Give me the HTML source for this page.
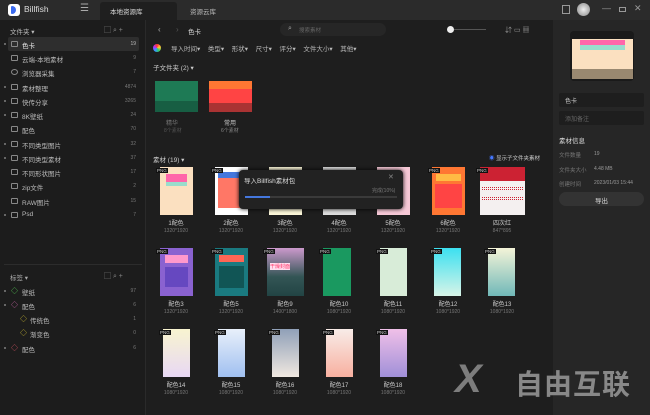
<!DOCTYPE html><html><head><meta charset="utf-8"><style>
*{margin:0;padding:0;box-sizing:border-box}
body{width:650px;height:415px;overflow:hidden;background:#1e1e1e;font-family:"Liberation Sans","Noto Sans CJK SC",sans-serif;color:#ccc;position:relative;font-size:7px}
.a{position:absolute}
.t{position:absolute;white-space:nowrap}
.side{left:0;top:20px;width:146px;height:395px;background:#1c1c1c;border-right:1px solid #2a2a2a}
.row{position:absolute;left:0;width:146px;height:13px;font-size:6.5px;color:#bbb}
.row .n{position:absolute;right:10px;top:3px;font-size:5px;color:#777}
.row .l{position:absolute;left:22px;top:2px}
.row .i{position:absolute;left:11px;top:3px;width:7px;height:6px;border:1px solid #888;border-radius:1px}
.row .d{position:absolute;left:4px;top:5px;width:2px;height:2px;background:#666}
.th{position:absolute;width:33px;height:48px}
.cap{position:absolute;width:60px;text-align:center;font-size:6px;color:#ccc}
.sz{position:absolute;width:60px;text-align:center;font-size:5px;color:#777}
.png{position:absolute;font-size:4.5px;background:#111;color:#ccc;padding:0 1px;left:-4px;top:1px}
</style></head><body>
<div class="a" style="left:0;top:0;width:650px;height:20px;background:#2b2b2b"></div>
<div class="a" style="left:8px;top:4px;width:12px;height:12px;background:#fff;border-radius:3px"><div class="a" style="left:3px;top:2px;width:5px;height:8px;background:#3b6bf0;border-radius:1px 4px 4px 1px"></div></div>
<div class="t" style="left:24px;top:4px;font-size:8.5px;color:#ddd">Billfish</div>
<div class="t" style="left:80px;top:3px;font-size:10px;color:#aaa">☰</div>
<div class="a" style="left:100px;top:2px;width:77px;height:18px;background:#1f1f1f;border-radius:3px 3px 0 0"></div>
<div class="t" style="left:110px;top:6px;font-size:6.5px;color:#ddd">本地资源库</div>
<div class="t" style="left:190px;top:6px;font-size:6.5px;color:#bbb">资源云库</div>
<div class="a" style="left:562px;top:5px;width:8px;height:9px;border:1px solid #999"></div>
<div class="a" style="left:577px;top:3px;width:13px;height:13px;border-radius:50%;background:radial-gradient(#eee,#888)"></div>
<div class="t" style="left:602px;top:3px;font-size:9px;color:#999">—</div>
<div class="a" style="left:619px;top:7px;width:7px;height:5px;border:1px solid #999"></div>
<div class="t" style="left:634px;top:3px;font-size:9px;color:#999">✕</div>

<div class="a side"></div>
<div class="t" style="left:10px;top:26px;font-size:6.5px;color:#bbb">文件夹 ▾</div>
<div class="t" style="left:104px;top:25px;font-size:7px;color:#888">▢ ⌕ +</div>
<div class="a" style="left:8px;top:37px;width:131px;height:14px;background:#2e2e2e;border-radius:2px"></div>
<div class="row" style="top:38px"><span class="d"></span><span class="i"></span><span class="l" style="color:#eee">色卡</span><span class="n" style="color:#bbb">19</span></div>
<div class="row" style="top:52px"><span class="i"></span><span class="l">云端-本地素材</span><span class="n">9</span></div>
<div class="row" style="top:66px"><span class="i" style="border-radius:50%"></span><span class="l">浏览器采集</span><span class="n">7</span></div>
<div class="row" style="top:81px"><span class="d"></span><span class="i"></span><span class="l">素材整理</span><span class="n">4874</span></div>
<div class="row" style="top:95px"><span class="d"></span><span class="i"></span><span class="l">快传分享</span><span class="n">3265</span></div>
<div class="row" style="top:109px"><span class="d"></span><span class="i"></span><span class="l">8K壁纸</span><span class="n">24</span></div>
<div class="row" style="top:123px"><span class="i"></span><span class="l">配色</span><span class="n">70</span></div>
<div class="row" style="top:138px"><span class="d"></span><span class="i"></span><span class="l">不同类型图片</span><span class="n">32</span></div>
<div class="row" style="top:152px"><span class="d"></span><span class="i"></span><span class="l">不同类型素材</span><span class="n">37</span></div>
<div class="row" style="top:166px"><span class="i"></span><span class="l">不同形状图片</span><span class="n">17</span></div>
<div class="row" style="top:180px"><span class="i"></span><span class="l">zip文件</span><span class="n">2</span></div>
<div class="row" style="top:195px"><span class="i"></span><span class="l">RAW图片</span><span class="n">15</span></div>
<div class="row" style="top:209px"><span class="d"></span><span class="i"></span><span class="l">Psd</span><span class="n">7</span></div>
<div class="a" style="left:4px;top:264px;width:138px;height:1px;background:#2c2c2c"></div>
<div class="t" style="left:10px;top:272px;font-size:6.5px;color:#aaa">标签 ▾</div>
<div class="t" style="left:104px;top:271px;font-size:7px;color:#888">▢ ⌕ +</div>
<div class="row" style="top:285px"><span class="d"></span><span class="l">壁纸</span><span class="n">97</span><span class="t" style="left:11px;top:1px;color:#5c5;font-size:7px">◇</span></div>
<div class="row" style="top:299px"><span class="d"></span><span class="l">配色</span><span class="n">6</span><span class="t" style="left:11px;top:1px;color:#c6a;font-size:7px">◇</span></div>
<div class="row" style="top:313px"><span class="l" style="left:30px">传统色</span><span class="n">1</span><span class="t" style="left:20px;top:1px;color:#cb3;font-size:7px">◇</span></div>
<div class="row" style="top:327px"><span class="l" style="left:30px">渐变色</span><span class="n">0</span><span class="t" style="left:20px;top:1px;color:#cb3;font-size:7px">◇</span></div>
<div class="row" style="top:342px"><span class="d"></span><span class="l">配色</span><span class="n">6</span><span class="t" style="left:11px;top:1px;color:#d56;font-size:7px">◇</span></div>

<!-- main -->
<div class="t" style="left:158px;top:25px;font-size:8px;color:#aaa">‹</div>
<div class="t" style="left:176px;top:25px;font-size:8px;color:#555">›</div>
<div class="t" style="left:188px;top:26px;font-size:6.5px;color:#ddd">色卡</div>
<div class="a" style="left:280px;top:23px;width:106px;height:13px;border-radius:7px;background:#262626"></div>
<div class="t" style="left:288px;top:25px;font-size:7px;color:#aaa">⌕</div>
<div class="t" style="left:299px;top:26px;font-size:5.5px;color:#666">搜索素材</div>
<div class="a" style="left:447px;top:26px;width:7px;height:7px;border-radius:50%;background:#eee"></div>
<div class="a" style="left:454px;top:29px;width:32px;height:1px;background:#555"></div>
<div class="t" style="left:505px;top:25px;font-size:7px;color:#999">⇵ ▭ ▦</div>
<div class="a" style="left:153px;top:44px;width:8px;height:8px;border-radius:50%;background:conic-gradient(#f33,#fc3,#3c6,#39f,#a3f,#f33)"></div>
<div class="t" style="left:171px;top:43px;font-size:6.5px;color:#bbb;word-spacing:2px">导入时间▾ &nbsp;类型▾ &nbsp;形状▾ &nbsp;尺寸▾ &nbsp;评分▾ &nbsp;文件大小▾ &nbsp;其他▾</div>
<div class="t" style="left:153px;top:62px;font-size:6.5px;color:#ccc">子文件夹 (2) ▾</div>
<div class="a" style="left:155px;top:81px;width:43px;height:31px;background:#1e7a55"><div class="a" style="left:0;top:20px;width:43px;height:11px;background:#175e43"></div></div>
<div class="t" style="left:166px;top:118px;font-size:6px;color:#777">精华</div>
<div class="t" style="left:164px;top:127px;font-size:5px;color:#555">8个素材</div>
<div class="a" style="left:209px;top:81px;width:43px;height:31px;background:#f44"><div class="a" style="left:0;top:0;width:43px;height:8px;background:#f73"></div><div class="a" style="left:0;top:22px;width:43px;height:9px;background:#a33"></div></div>
<div class="t" style="left:224px;top:118px;font-size:6px;color:#ccc">常用</div>
<div class="t" style="left:221px;top:127px;font-size:5px;color:#888">6个素材</div>
<div class="t" style="left:153px;top:154px;font-size:6.5px;color:#ccc">素材 (19) ▾</div>
<div class="t" style="left:489px;top:154px;font-size:5.5px;color:#ccc"><span style="color:#47f">◉</span> 显示子文件夹素材</div>

<!-- row1 -->
<div class="th" style="left:160px;top:167px;background:#fbe0c0"><div class="a" style="left:6px;top:7px;width:21px;height:8px;background:#f6a"></div><div class="a" style="left:6px;top:15px;width:21px;height:4px;background:#9dc"></div><div class="png">PNG</div></div>
<div class="th" style="left:215px;top:167px;background:#fff"><div class="a" style="left:3px;top:5px;width:27px;height:6px;background:#47d"></div><div class="a" style="left:3px;top:11px;width:27px;height:30px;background:#f76"></div><div class="png">PNG</div></div>
<div class="th" style="left:269px;top:167px;background:#fbf6d8"></div>
<div class="th" style="left:323px;top:167px;background:#ddd"></div>
<div class="th" style="left:377px;top:167px;background:#f6c8d6"></div>
<div class="th" style="left:432px;top:167px;background:#f73"><div class="a" style="left:4px;top:7px;width:25px;height:7px;background:#fb4"></div><div class="a" style="left:3px;top:17px;width:27px;height:24px;background:#f44"></div><div class="png">PNG</div></div>
<div class="th" style="left:480px;top:167px;width:45px;background:#f4f0f0"><div class="a" style="left:0;top:0;width:45px;height:14px;background:#c23"></div><div class="a" style="left:2px;top:20px;width:41px;height:3px;border-top:1px dotted #c23;border-bottom:1px dotted #c23"></div><div class="a" style="left:2px;top:30px;width:41px;height:3px;border-top:1px dotted #c23;border-bottom:1px dotted #c23"></div><div class="png">PNG</div></div>
<div class="a" style="left:239px;top:170px;width:164px;height:39px;background:#222;border-radius:4px;box-shadow:0 0 4px #000"></div>
<div class="t" style="left:244px;top:175px;font-size:6.5px;color:#ddd">导入Billfish素材包</div>
<div class="t" style="left:388px;top:173px;font-size:7px;color:#888">✕</div>
<div class="t" style="left:372px;top:187px;font-size:5px;color:#777">完成(10%)</div>
<div class="a" style="left:245px;top:196px;width:152px;height:2px;background:#3a3a3a"></div>
<div class="a" style="left:245px;top:196px;width:25px;height:2px;background:#47d"></div>
<div class="cap" style="left:146px;top:218px">1配色</div><div class="sz" style="left:146px;top:228px">1320*1920</div>
<div class="cap" style="left:201px;top:218px">2配色</div><div class="sz" style="left:201px;top:228px">1320*1920</div>
<div class="cap" style="left:255px;top:218px">3配色</div><div class="sz" style="left:255px;top:228px">1320*1920</div>
<div class="cap" style="left:309px;top:218px">4配色</div><div class="sz" style="left:309px;top:228px">1320*1920</div>
<div class="cap" style="left:363px;top:218px">5配色</div><div class="sz" style="left:363px;top:228px">1320*1920</div>
<div class="cap" style="left:418px;top:218px">6配色</div><div class="sz" style="left:418px;top:228px">1320*1920</div>
<div class="cap" style="left:472px;top:218px">四次红</div><div class="sz" style="left:472px;top:228px">847*895</div>
<!-- row2 -->
<div class="th" style="left:160px;top:248px;background:#8a62d0"><div class="a" style="left:5px;top:7px;width:23px;height:8px;background:#f9c"></div><div class="a" style="left:5px;top:19px;width:23px;height:20px;background:#6648c0"></div><div class="png">PNG</div></div>
<div class="th" style="left:215px;top:248px;background:#1a7a80"><div class="a" style="left:4px;top:7px;width:25px;height:7px;background:#f65"></div><div class="a" style="left:4px;top:18px;width:25px;height:22px;background:#155"></div><div class="png">PNG</div></div>
<div class="th" style="left:267px;top:248px;width:37px;background:linear-gradient(#c9c,#355 60%,#244)"><div class="t" style="left:3px;top:15px;font-size:5px;color:#f36;background:#fde">干燥封面</div><div class="png">PNG</div></div>
<div class="th" style="left:323px;top:248px;width:28px;background:#1a9960"><div class="png">PNG</div></div>
<div class="th" style="left:380px;top:248px;width:27px;background:#d8ecd8"><div class="png">PNG</div></div>
<div class="th" style="left:434px;top:248px;width:27px;background:linear-gradient(#3ce0f0,#d8f4e8)"><div class="png">PNG</div></div>
<div class="th" style="left:488px;top:248px;width:27px;background:linear-gradient(#f4f4d8,#70b8b8)"><div class="png">PNG</div></div>
<div class="cap" style="left:146px;top:299px">配色3</div><div class="sz" style="left:146px;top:309px">1320*1920</div>
<div class="cap" style="left:201px;top:299px">配色5</div><div class="sz" style="left:201px;top:309px">1320*1920</div>
<div class="cap" style="left:255px;top:299px">配色9</div><div class="sz" style="left:255px;top:309px">1400*1800</div>
<div class="cap" style="left:309px;top:299px">配色10</div><div class="sz" style="left:309px;top:309px">1080*1920</div>
<div class="cap" style="left:363px;top:299px">配色11</div><div class="sz" style="left:363px;top:309px">1080*1920</div>
<div class="cap" style="left:418px;top:299px">配色12</div><div class="sz" style="left:418px;top:309px">1080*1920</div>
<div class="cap" style="left:472px;top:299px">配色13</div><div class="sz" style="left:472px;top:309px">1080*1920</div>
<!-- row3 -->
<div class="th" style="left:163px;top:329px;width:27px;background:linear-gradient(#f8f4d0,#e8d8f4)"><div class="png">PNG</div></div>
<div class="th" style="left:218px;top:329px;width:27px;background:linear-gradient(#e8f0fa,#a0c0f0)"><div class="png">PNG</div></div>
<div class="th" style="left:272px;top:329px;width:27px;background:linear-gradient(#90a0b8,#f0e8e0)"><div class="png">PNG</div></div>
<div class="th" style="left:326px;top:329px;width:27px;background:linear-gradient(#f8ece8,#f8b0a0)"><div class="png">PNG</div></div>
<div class="th" style="left:380px;top:329px;width:27px;background:linear-gradient(#f0c0e8,#a090d8)"><div class="png">PNG</div></div>
<div class="cap" style="left:146px;top:380px">配色14</div><div class="sz" style="left:146px;top:390px">1080*1920</div>
<div class="cap" style="left:201px;top:380px">配色15</div><div class="sz" style="left:201px;top:390px">1080*1920</div>
<div class="cap" style="left:255px;top:380px">配色16</div><div class="sz" style="left:255px;top:390px">1080*1920</div>
<div class="cap" style="left:309px;top:380px">配色17</div><div class="sz" style="left:309px;top:390px">1080*1920</div>
<div class="cap" style="left:363px;top:380px">配色18</div><div class="sz" style="left:363px;top:390px">1080*1920</div>

<!-- right panel -->
<div class="a" style="left:553px;top:20px;width:97px;height:395px;background:#262626"></div>
<div class="a" style="left:570px;top:31px;width:64px;height:50px;background:#1a1a1a;border-radius:4px"></div>
<div class="a" style="left:572px;top:39px;width:61px;height:40px;background:#fbe0c0"><div class="a" style="left:8px;top:1px;width:45px;height:5px;background:#f6a"></div><div class="a" style="left:8px;top:6px;width:45px;height:5px;background:#9dc"></div><div class="a" style="left:0;top:30px;width:61px;height:10px;background:#998870"></div></div>
<div class="a" style="left:559px;top:93px;width:85px;height:14px;background:#1e1e1e;border-radius:2px"></div>
<div class="t" style="left:565px;top:96px;font-size:6px;color:#ccc">色卡</div>
<div class="a" style="left:559px;top:111px;width:85px;height:14px;background:#1e1e1e;border-radius:2px"></div>
<div class="t" style="left:565px;top:114px;font-size:6px;color:#666">添加备注</div>
<div class="t" style="left:559px;top:135px;font-size:6.5px;color:#ddd">素材信息</div>
<div class="t" style="left:559px;top:151px;font-size:5.5px;color:#777">文件数量</div><div class="t" style="left:594px;top:151px;font-size:5px;color:#999">19</div>
<div class="t" style="left:559px;top:166px;font-size:5.5px;color:#777">文件夹大小</div><div class="t" style="left:594px;top:166px;font-size:5px;color:#999">4.48 MB</div>
<div class="t" style="left:559px;top:180px;font-size:5.5px;color:#777">创建时间</div><div class="t" style="left:594px;top:180px;font-size:5px;color:#999">2023/01/03 15:44</div>
<div class="a" style="left:559px;top:192px;width:85px;height:14px;background:#333;border-radius:7px"></div>
<div class="t" style="left:595px;top:195px;font-size:6.5px;color:#ddd">导出</div>

<!-- watermark -->
<div class="t" style="left:455px;top:357px;font-size:40px;font-weight:bold;font-style:italic;color:#888;opacity:.9">X</div>
<div class="t" style="left:515px;top:363px;font-size:28px;font-weight:bold;color:#888;letter-spacing:1px">自由互联</div>
</body></html>
